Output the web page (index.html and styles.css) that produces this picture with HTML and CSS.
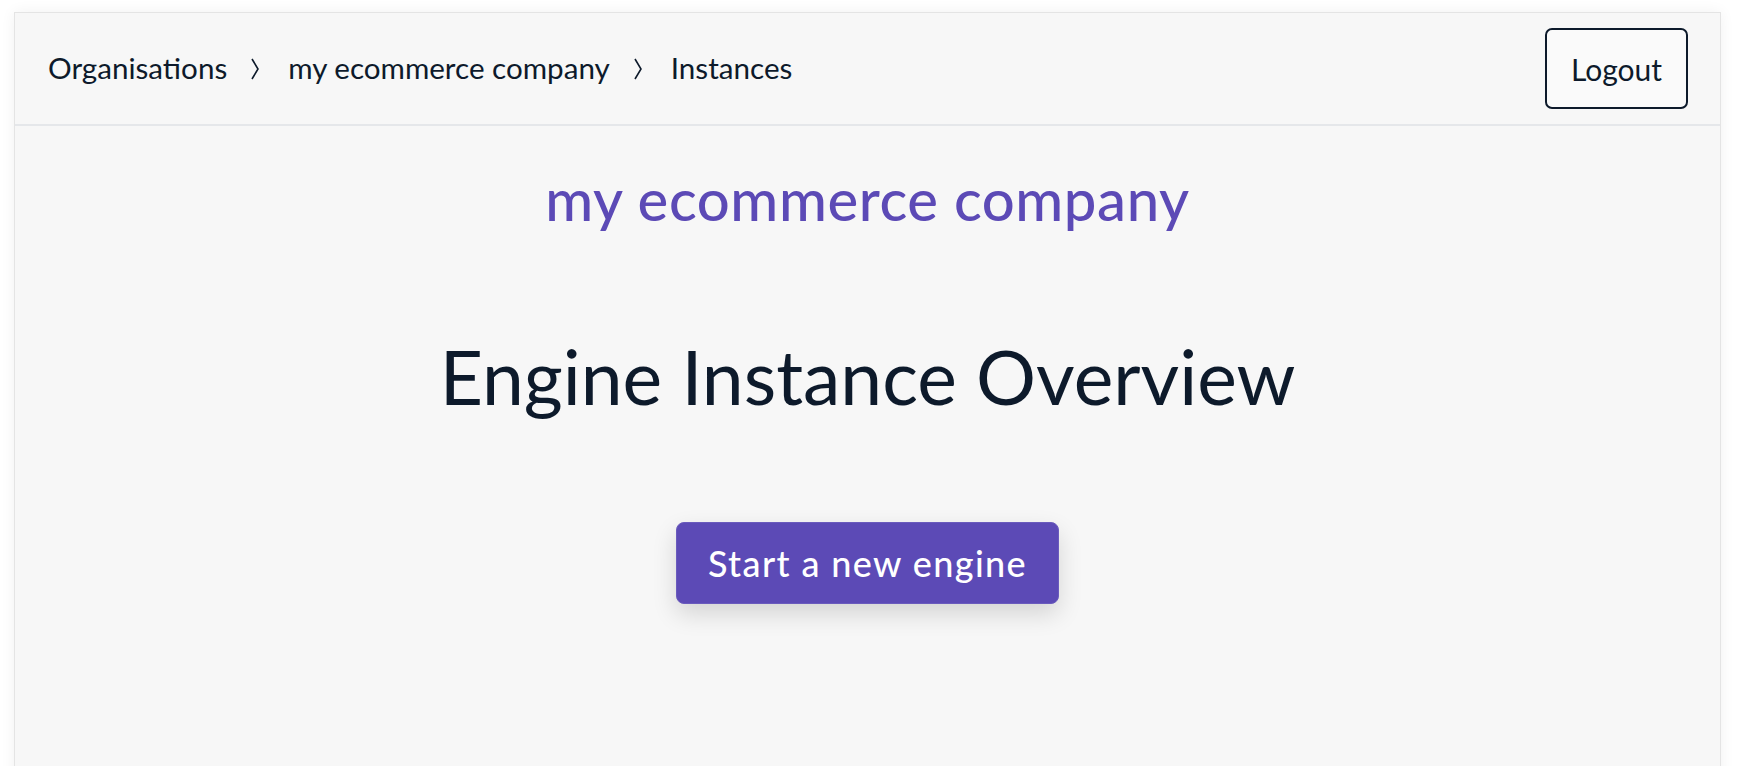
FILE: index.html
```html
<!DOCTYPE html>
<html lang="en">
<head>
<meta charset="utf-8">
<title>Engine Instance Overview</title>
<link rel="stylesheet" href="styles.css">
</head>
<body>
  <div class="card">
    <header class="topbar">
      <nav class="crumbs">
        <a class="crumb" href="#">Organisations</a>
        <svg class="sep" viewBox="0 0 8 22" aria-hidden="true"><polyline points="1,1 7,11 1,21" /></svg>
        <a class="crumb" href="#">my ecommerce company</a>
        <svg class="sep" viewBox="0 0 8 22" aria-hidden="true"><polyline points="1,1 7,11 1,21" /></svg>
        <span class="crumb">Instances</span>
      </nav>
      <button class="logout" type="button">Logout</button>
    </header>
    <main class="content">
      <h2 class="org-name">my ecommerce company</h2>
      <h1 class="page-title">Engine Instance Overview</h1>
      <button class="primary" type="button">Start a new engine</button>
    </main>
  </div>
</body>
</html>
```

FILE: styles.css
```css
html, body {
  margin: 0;
  padding: 0;
  background: #ffffff;
}

body {
  font-family: Lato, "Open Sans", "Liberation Sans", sans-serif;
  color: #0d1a2b;
  overflow: hidden;
}

.card {
  margin: 12px 17px 0 14px;
  min-height: 820px;
  background: #f7f7f7;
  border: 1px solid #e4e4e4;
  box-shadow: 0 0 14px rgba(0, 0, 0, 0.06);
}

.topbar {
  height: 111px;
  display: flex;
  align-items: center;
  justify-content: space-between;
  padding: 0 32px 0 33px;
  border-bottom: 2px solid #e5e7ea;
}

.crumbs {
  display: flex;
  align-items: center;
  margin-top: -2px;
}

.crumb {
  font-size: 29.6px;
  color: #0d1a2b;
  text-decoration: none;
}

.sep {
  width: 8px;
  height: 22px;
  margin: 2px 29px 0 24px;
}

.sep polyline {
  fill: none;
  stroke: #0d1a2b;
  stroke-width: 1.6;
}

.logout {
  font-family: inherit;
  font-size: 30px;
  color: #0d1a2b;
  background: #fafafa;
  border: 2px solid #0d1a2b;
  border-radius: 7px;
  height: 81px;
  padding: 0 24px;
  cursor: pointer;
}

.content {
  display: flex;
  flex-direction: column;
  align-items: center;
  text-align: center;
}

.org-name {
  margin: 38px 0 0;
  font-size: 58px;
  line-height: 1.2;
  font-weight: 500;
  letter-spacing: 0.6px;
  color: #5c4ab6;
}

.page-title {
  margin: 97px 0 0;
  font-size: 75px;
  line-height: 1.2;
  font-weight: 400;
  color: #0d1a2b;
}

.primary {
  margin-top: 101px;
  font-family: inherit;
  font-size: 36px;
  font-weight: 500;
  letter-spacing: 1.4px;
  color: #ffffff;
  background: #5c4ab6;
  border: 1px solid #6a5bbd;
  border-radius: 8px;
  height: 82px;
  padding: 0 31px;
  box-shadow: 0 10px 24px rgba(0, 0, 0, 0.14);
  cursor: pointer;
}
```
